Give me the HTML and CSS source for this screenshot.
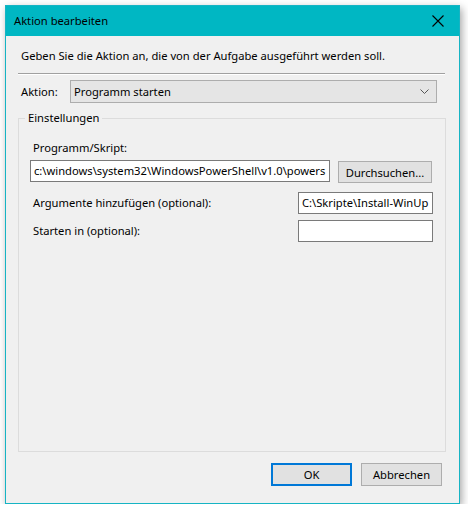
FILE: index.html
```html
<!DOCTYPE html>
<html lang="de">
<head>
<meta charset="utf-8">
<title>Aktion bearbeiten</title>
<link rel="stylesheet" href="styles.css">
</head>
<body>
<div class="window">
  <div class="titlebar">
    <span class="title">Aktion bearbeiten</span>
    <svg class="close" width="12" height="12" viewBox="0 0 12 12"><path d="M0.5 0.5 L11.5 11.5 M11.5 0.5 L0.5 11.5" stroke="#000" stroke-width="1.1" fill="none"/></svg>
  </div>
  <div class="content">
    <p class="desc">Geben Sie die Aktion an, die von der Aufgabe ausgeführt werden soll.</p>
    <div class="sep"></div>
    <div class="action-row">
      <span class="lbl">Aktion:</span>
      <div class="combo">
        <span>Programm starten</span>
        <svg class="chev" width="9" height="5" viewBox="0 0 9 5"><path d="M0.5 0.5 L4.5 4.5 L8.5 0.5" stroke="#555" stroke-width="1" fill="none"/></svg>
      </div>
    </div>
    <fieldset class="group">
      <legend>Einstellungen</legend>
      <div class="prog-label">Programm/Skript:</div>
      <div class="prog-row">
        <div class="input wide"><span>c:\windows\system32\WindowsPowerShell\v1.0\powers</span></div>
        <div class="btn browse">Durchsuchen...</div>
      </div>
      <div class="opt-row">
        <span class="lbl2">Argumente hinzufügen (optional):</span>
        <div class="input small"><span>C:\Skripte\Install-WinUp</span></div>
      </div>
      <div class="opt-row second">
        <span class="lbl2">Starten in (optional):</span>
        <div class="input small"></div>
      </div>
    </fieldset>
    <div class="buttons">
      <div class="btn dlg default">OK</div>
      <div class="btn dlg">Abbrechen</div>
    </div>
  </div>
</div>
</body>
</html>
```
FILE: styles.css
```css
html, body {
  margin: 0;
  padding: 0;
  background: #ffffff;
}
body {
  font-family: "Noto Sans", "Segoe UI", "DejaVu Sans", sans-serif;
  font-size: 11.2px;
  color: #000;
}
.window {
  margin: 5px 0 0 5px;
  width: 453px;
  height: 497px;
  border: 1px solid #16b4c4;
  background: #f0f0f0;
  box-shadow: 2px 3px 8px rgba(0,0,0,0.35);
  display: flex;
  flex-direction: column;
}
.titlebar {
  height: 30px;
  background: #00b7c3;
  display: flex;
  align-items: center;
  justify-content: space-between;
  padding: 0 15px 0 8px;
  flex: none;
}
.title {
  line-height: 16px;
}
.close { display: block; }
.content {
  flex: 1;
  display: flex;
  flex-direction: column;
  padding: 0 12px 0 12px;
}
.desc {
  margin: 12px 0 0 3px;
  line-height: 16px;
  height: 16px;
}
.sep {
  margin-top: 9px;
  height: 1px;
  background: #a0a0a0;
  border-bottom: 1px solid #fff;
  width: 427px;
}
.action-row {
  display: flex;
  align-items: center;
  margin-top: 5px;
  height: 23px;
}
.lbl {
  width: 49px;
  padding-left: 3px;
  line-height: 16px;
}
.combo {
  width: 355px;
  height: 21px;
  border: 1px solid #adadad;
  background: #e5e5e5;
  display: flex;
  align-items: center;
  justify-content: space-between;
  padding: 0 7px 0 3px;
  box-sizing: content-box;
}
.chev { display: block; }
.group {
  margin: 7px 0 0 0;
  width: 428px;
  height: 342px;
  border: 1px solid #dcdcdc;
  padding: 0;
  box-sizing: border-box;
  min-width: 0;
}
.group legend {
  margin-left: 6px;
  padding: 0 3px;
  line-height: 16px;
}
.prog-label {
  margin: 14px 0 0 14px;
  line-height: 16px;
}
.prog-row {
  display: flex;
  align-items: flex-start;
  margin-top: 4px;
  margin-left: 11px;
}
.input {
  background: #fff;
  border: 1px solid #7a7a7a;
  height: 20px;
  line-height: 20px;
  padding: 0 3px;
  white-space: nowrap;
  overflow: hidden;
  box-sizing: content-box;
}
.input.wide { width: 292px; }
.btn {
  background: #e1e1e1;
  border: 1px solid #adadad;
  display: flex;
  align-items: center;
  justify-content: center;
  box-sizing: border-box;
}
.browse {
  margin-left: 8px;
  margin-top: 1px;
  width: 94px;
  height: 22px;
}
.opt-row {
  display: flex;
  align-items: center;
  justify-content: space-between;
  margin: 9px 12px 0 14px;
}
.opt-row.second { margin-top: 6px; }
.input.small { width: 127px; }
.lbl2 { line-height: 16px; }
.buttons {
  display: flex;
  justify-content: flex-end;
  gap: 9px;
  margin-top: 11px;
  padding-right: 5px;
}
.dlg {
  width: 81px;
  height: 23px;
}
.dlg.default {
  border: 2px solid #0078d7;
}
```
